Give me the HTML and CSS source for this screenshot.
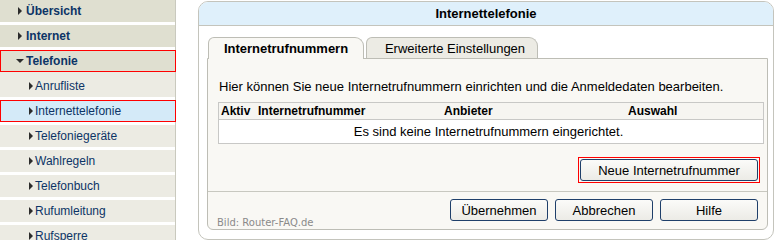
FILE: index.html
```html
<!DOCTYPE html>
<html lang="de">
<head>
<meta charset="utf-8">
<title>Internettelefonie</title>
<link rel="stylesheet" href="styles.css">
</head>
<body>
<div class="page">
  <nav class="sidebar">
    <a class="nav-item top"><span class="tri-right"></span>Übersicht</a>
    <a class="nav-item top"><span class="tri-right"></span>Internet</a>
    <a class="nav-item top open highlight"><span class="tri-down"></span>Telefonie</a>
    <div class="submenu">
      <a class="nav-item sub"><span class="tri-right"></span>Anrufliste</a>
      <a class="nav-item sub active highlight"><span class="tri-right"></span>Internettelefonie</a>
      <a class="nav-item sub"><span class="tri-right"></span>Telefoniegeräte</a>
      <a class="nav-item sub"><span class="tri-right"></span>Wahlregeln</a>
      <a class="nav-item sub"><span class="tri-right"></span>Telefonbuch</a>
      <a class="nav-item sub"><span class="tri-right"></span>Rufumleitung</a>
      <a class="nav-item sub"><span class="tri-right"></span>Rufsperre</a>
    </div>
  </nav>
  <main class="panel">
    <div class="panel-title">Internettelefonie</div>
    <div class="panel-body">
      <div class="tabs">
        <div class="tab tab-active">Internetrufnummern</div>
        <div class="tab tab-inactive">Erweiterte Einstellungen</div>
      </div>
      <div class="tab-content">
        <div class="content-main">
          <p class="intro">Hier können Sie neue Internetrufnummern einrichten und die Anmeldedaten bearbeiten.</p>
          <div class="table">
            <div class="thead">
              <span>Aktiv</span>
              <span>Internetrufnummer</span>
              <span>Anbieter</span>
              <span>Auswahl</span>
            </div>
            <div class="tbody">Es sind keine Internetrufnummern eingerichtet.</div>
          </div>
          <div class="action-row">
            <span class="mark-box"><button class="btn btn-wide">Neue Internetrufnummer</button></span>
          </div>
        </div>
        <div class="content-footer">
          <span class="credit">Bild: Router-FAQ.de</span>
          <div class="buttons">
            <button class="btn">Übernehmen</button>
            <button class="btn">Abbrechen</button>
            <button class="btn">Hilfe</button>
          </div>
        </div>
      </div>
    </div>
  </main>
</div>
</body>
</html>
```

FILE: styles.css
```css
html, body {
  margin: 0;
  padding: 0;
  background: #ffffff;
}

body {
  font-family: "Liberation Sans", Arial, sans-serif;
  color: #000000;
  width: 778px;
  height: 240px;
  overflow: hidden;
}

.page {
  display: flex;
  height: 240px;
  overflow: hidden;
}

/* ---------- Sidebar ---------- */
.sidebar {
  width: 175px;
  flex: none;
  border-right: 1px solid #c9c9be;
  display: flex;
  flex-direction: column;
}

.nav-item {
  position: relative;
  display: flex;
  align-items: center;
  flex: none;
  height: 22px;
  margin-bottom: 3px;
  color: #0c3466;
  text-decoration: none;
  font-size: 12px;
}

.top {
  background: #dfdfd0;
  padding-left: 18px;
  font-weight: bold;
}

.top.open {
  margin-bottom: 0;
  padding-left: 16px;
}

.sub {
  background: #ecebe3;
  padding-left: 29px;
}

.sub.active {
  background: #d4eaf8;
}

.submenu {
  display: flex;
  flex-direction: column;
  border-top: 3px solid #ecebe3;
}

.tri-right {
  width: 0;
  height: 0;
  border-top: 4px solid transparent;
  border-bottom: 4px solid transparent;
  border-left: 4px solid #2b2b2b;
  margin-right: 4px;
}

.sub .tri-right {
  margin-right: 2px;
}

.tri-down {
  width: 0;
  height: 0;
  border-left: 4px solid transparent;
  border-right: 4px solid transparent;
  border-top: 4px solid #2b2b2b;
  margin-right: 2px;
}

.highlight::after {
  content: "";
  position: absolute;
  top: 0;
  left: 0;
  right: -1px;
  bottom: 0;
  border: 1px solid #ff0000;
}

/* ---------- Panel ---------- */
.panel {
  flex: none;
  width: 576px;
  height: 239px;
  margin: 1px 0 0 22px;
  box-sizing: border-box;
  border: 1px solid #c4c4bc;
  border-radius: 10px;
  overflow: hidden;
  background: #ffffff;
  display: flex;
  flex-direction: column;
}

.panel-title {
  flex: none;
  height: 24px;
  box-sizing: border-box;
  border-bottom: 1px solid #c4c4bc;
  background: #dff0fb;
  text-align: center;
  font-weight: bold;
  font-size: 13px;
  line-height: 23px;
}

.panel-body {
  flex: 1;
  display: flex;
  flex-direction: column;
  padding: 11px 5px 9px 8px;
}

.tabs {
  flex: none;
  display: flex;
  align-items: flex-end;
  height: 21px;
  position: relative;
  z-index: 1;
}

.tab {
  box-sizing: border-box;
  height: 21px;
  border: 1px solid #bdbdb5;
  border-bottom: none;
  border-radius: 6px 9px 0 0;
  font-size: 13px;
  display: flex;
  align-items: center;
  justify-content: center;
}

.tab-active {
  width: 156px;
  height: 22px;
  margin: 0 0 -1px 1px;
  background: #f9f8f4;
  font-weight: bold;
  padding-bottom: 1px;
}

.tab-inactive {
  width: 172px;
  margin-left: 2px;
  background: #ecebe4;
  padding-left: 6px;
}

.tab-content {
  flex: 1;
  display: flex;
  flex-direction: column;
  border: 1px solid #bdbdb5;
  border-radius: 0 0 6px 6px;
  background: #f9f8f4;
}

.content-main {
  flex: none;
  padding: 20px 3px 8px 10px;
}

.intro {
  margin: 0 0 7px 1px;
  font-size: 13px;
  line-height: 16px;
}

.table {
  border: 1px solid #c8c8c6;
  background: #ffffff;
}

.thead {
  display: grid;
  grid-template-columns: 37px 186px 184px 1fr;
  height: 16px;
  line-height: 16px;
  font-size: 12px;
  font-weight: bold;
  background: #f6f5f1;
  border-bottom: 1px solid #c8c8c6;
}

.thead span {
  padding-left: 2px;
}

.tbody {
  height: 23px;
  line-height: 23px;
  font-size: 13px;
  text-align: center;
  padding-right: 5px;
}

.action-row {
  display: flex;
  justify-content: flex-end;
  margin: 13px 4px 0 0;
}

.mark-box {
  display: flex;
  border: 1px solid #ff0000;
  padding: 1px;
}

.btn {
  box-sizing: border-box;
  width: 98px;
  height: 22px;
  padding: 0;
  font-family: "Liberation Sans", Arial, sans-serif;
  font-size: 13px;
  color: #000000;
  border: 1px solid #1f3f6a;
  border-radius: 3px;
  background: linear-gradient(#fbfbf9, #ecebe6);
}

.btn-wide {
  width: 178px;
}

.content-footer {
  flex: 1;
  display: flex;
  justify-content: space-between;
  border-top: 1px solid #c8c8c0;
  padding: 7px 9px 0 9px;
}

.credit {
  align-self: flex-end;
  font-family: "DejaVu Sans", sans-serif;
  font-size: 10px;
  line-height: 12px;
  color: #8a8a8a;
}

.buttons {
  display: flex;
  gap: 7px;
  align-self: flex-start;
}
```
